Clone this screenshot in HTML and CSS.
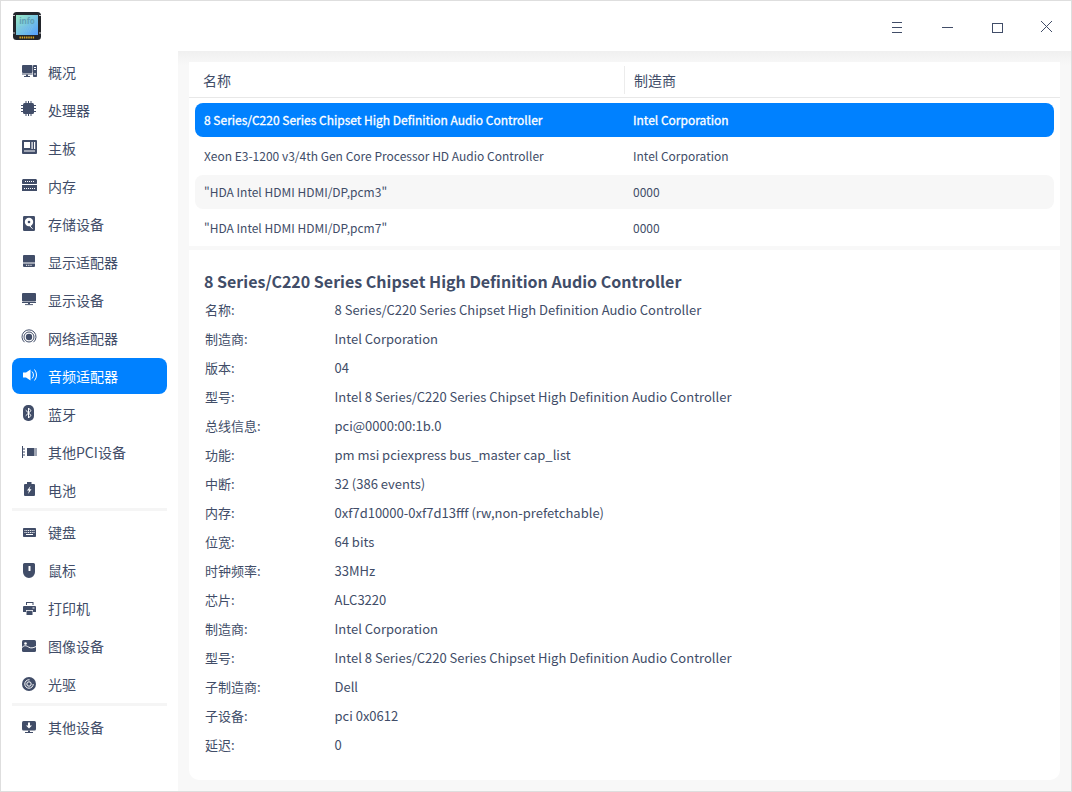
FILE: index.html
```html
<!DOCTYPE html>
<html lang="zh-CN">
<head>
    <meta charset="UTF-8">
    <meta name="viewport" content="width=device-width, initial-scale=1.0">
    <title>设备管理器</title>
    <link rel="stylesheet" href="styles.css">
</head>
<body>
    <div class="window">
        <div class="titlebar">
            <svg class="app-icon" viewBox="0 0 28 28">
                <defs>
                    <linearGradient id="screen" x1="0" y1="0" x2="1" y2="1">
                        <stop offset="0" stop-color="#9aeac4"/>
                        <stop offset="1" stop-color="#559fff"/>
                    </linearGradient>
                </defs>
                <rect width="28" height="28" rx="3.5" fill="#22252b"/>
                <rect x="3" y="3" width="22" height="20" fill="url(#screen)"/>
                <text x="14" y="12" class="app-icon-text">info</text>
                <path d="M7 15h14M8 17h12M9 19h9" stroke="#7dbcec" stroke-width="1" stroke-dasharray="1 1"/>
                <path d="M6.500 25.500h15" stroke="#e0a81c" stroke-width="2" stroke-dasharray="1.400 .8"/>
                <path d="M0 3.500h2M26 3.500h2M0 21h2M26 21h2" stroke="#c8c8c8" stroke-width="1.200"/>
            </svg>
            <div class="window-buttons">
                <svg class="win-btn" viewBox="0 0 50 50"><path d="M21 21.500h10M21 26.500h10M21 31.500h10" stroke="#414d68" fill="none"/></svg>
                <svg class="win-btn" viewBox="0 0 50 50"><path d="M21 26.500h11" stroke="#414d68" fill="none"/></svg>
                <svg class="win-btn" viewBox="0 0 50 50"><rect x="21.500" y="22.500" width="10" height="9" stroke="#414d68" fill="none"/></svg>
                <svg class="win-btn" viewBox="0 0 50 50"><path d="M20 20l11 11M31 20l-11 11" stroke="#414d68" fill="none"/></svg>
            </div>
        </div>

        <div class="body">
            <div class="sidebar">
                <div class="nav-item">
                    <svg class="nav-icon" viewBox="0 0 16 16"><rect x="1" y="1" width="10.500" height="8" rx="1"/><rect x="1" y="9.500" width="10.500" height="1"/><rect x="5" y="10.500" width="2" height="1.500"/><rect x="3" y="12" width="6" height="1"/><rect x="12" y="1" width="4" height="12" rx=".7"/><rect class="cut" x="13" y="3" width="2" height="1"/><rect class="cut" x="13" y="5" width="2" height="1"/><rect class="cut" x="13.500" y="9" width="1" height="2"/></svg>
                    <span>概况</span>
                </div>
                <div class="nav-item">
                    <svg class="nav-icon" viewBox="0 0 16 16"><rect x="2" y="1" width="11" height="11" rx="1.500"/><path class="pins" d="M5 -1v2M7.500 -1v2M10 -1v2M5 12v2M7.500 12v2M10 12v2M0 3.500h2M0 6.500h2M0 9.500h2M13 3.500h2M13 6.500h2M13 9.500h2"/></svg>
                    <span>处理器</span>
                </div>
                <div class="nav-item">
                    <svg class="nav-icon" viewBox="0 0 16 16"><rect x="1" y="0" width="15" height="14" rx="1"/><rect class="cut" x="3" y="2" width="6" height="6"/><rect class="cut" x="10.500" y="2" width="1.200" height="7"/><rect class="cut" x="13" y="2" width="1.200" height="7"/><rect class="cut" x="3" y="10.500" width="11" height="1"/></svg>
                    <span>主板</span>
                </div>
                <div class="nav-item">
                    <svg class="nav-icon" viewBox="0 0 16 16"><path d="M2 1h13l1 1v3.500l-.6.6.6.6V13H1V6.700l.6-.6-.6-.6V2z"/><path class="cut-line" d="M4 3.500h9" stroke-dasharray="1 1"/><path class="cut-line" d="M1 6.500h15"/><path class="cut-line" d="M3 10.500h11" stroke-width="3" stroke-dasharray="1 1"/></svg>
                    <span>内存</span>
                </div>
                <div class="nav-item">
                    <svg class="nav-icon" viewBox="0 0 16 16"><rect x="2" y="0" width="12" height="15" rx="1.200"/><circle class="cut" cx="8" cy="6" r="4.200"/><circle cx="8" cy="6" r="1.300"/><path class="cut-line" d="M7.500 8.500l4 4.200" stroke-width="1.500"/></svg>
                    <span>存储设备</span>
                </div>
                <div class="nav-item">
                    <svg class="nav-icon" viewBox="0 0 16 16"><path d="M3 1h10a1 1 0 0 1 1 1v6.500H2V2a1 1 0 0 1 1-1z"/><path d="M2 9.500h12V12a1 1 0 0 1-1 1H3a1 1 0 0 1-1-1z"/><path class="cut-line" d="M5 11.300h6" stroke-dasharray="1.200 1"/></svg>
                    <span>显示适配器</span>
                </div>
                <div class="nav-item">
                    <svg class="nav-icon" viewBox="0 0 16 16"><rect x="1" y="1" width="14" height="8.500" rx="1"/><rect x="1" y="10" width="14" height="1"/><rect x="7" y="11" width="2" height="1.200"/><rect x="4" y="12.200" width="8" height=".9"/></svg>
                    <span>显示设备</span>
                </div>
                <div class="nav-item">
                    <svg class="nav-icon" viewBox="0 0 16 16"><circle cx="8" cy="7" r="3.200"/><circle class="ring" cx="8" cy="7" r="5"/><path class="ring" d="M3.500 12.200a7 7 0 1 1 9 0"/></svg>
                    <span>网络适配器</span>
                </div>
                <div class="nav-item active">
                    <svg class="nav-icon" viewBox="0 0 16 16"><path d="M2 4.500h3L9.500 1.500v11L5 9.500H2z"/><path class="ring" d="M11 3.500a5 5 0 0 1 0 7"/><path class="ring" d="M13.500 1.500a8.500 8.500 0 0 1 0 11"/></svg>
                    <span>音频适配器</span>
                </div>
                <div class="nav-item">
                    <svg class="nav-icon" viewBox="0 0 16 16"><rect x="2" y="-1" width="11" height="16" rx="5"/><path class="cut-line" d="M4.700 4.200l5.300 5.200-2.500 2.600V2l2.500 2.600-5.300 5.200" stroke-width=".9"/></svg>
                    <span>蓝牙</span>
                </div>
                <div class="nav-item">
                    <svg class="nav-icon" viewBox="0 0 16 16"><rect x="1" y="2" width="1" height="12"/><rect x="2" y="4.500" width="2" height="1"/><rect x="2" y="7.500" width="2" height="1"/><rect x="2" y="10.500" width="2" height="1"/><rect x="6" y="4" width="7.500" height="8"/><rect x="14.500" y="4" width="1" height="8"/></svg>
                    <span>其他PCI设备</span>
                </div>
                <div class="nav-item">
                    <svg class="nav-icon" viewBox="0 0 16 16"><path d="M6 0h4.500v2H13a1 1 0 0 1 1 1v10a1 1 0 0 1-1 1H4a1 1 0 0 1-1-1V3a1 1 0 0 1 1-1h2z"/><path class="cut" d="M9.500 4L6 8.500h2L7 12l3.500-4.700H8.500z"/></svg>
                    <span>电池</span>
                </div>
                <div class="separator"></div>
                <div class="nav-item">
                    <svg class="nav-icon" viewBox="0 0 16 16"><rect x="2" y="4" width="13" height="9" rx=".8"/><path class="cut-line" d="M3.500 6.500h10M3.500 8.500h10" stroke-dasharray="1 .8"/><path class="cut-line" d="M5 10.500h7"/></svg>
                    <span>键盘</span>
                </div>
                <div class="nav-item">
                    <svg class="nav-icon" viewBox="0 0 16 16"><path d="M3.500 1h9A1.500 1.500 0 0 1 14 2.500V10a6 6 0 0 1-12 0V2.500A1.500 1.500 0 0 1 3.500 1z"/><rect class="cut" x="7.500" y="4" width="2" height="5" rx=".5"/></svg>
                    <span>鼠标</span>
                </div>
                <div class="nav-item">
                    <svg class="nav-icon" viewBox="0 0 16 16"><path d="M5 2h7.500v3h-1V3H6v2H5z"/><path d="M3 6h11a1 1 0 0 1 1 1v5h-3V10H5v2H2V7a1 1 0 0 1 1-1z"/><rect x="5.500" y="10.800" width="6" height="4.200"/><rect class="cut" x="11.500" y="7.500" width="2" height="1"/></svg>
                    <span>打印机</span>
                </div>
                <div class="nav-item">
                    <svg class="nav-icon" viewBox="0 0 16 16"><rect x="1" y="2" width="14" height="12" rx="1.500"/><circle class="cut" cx="4.500" cy="5.500" r="1.300"/><path class="cut-line" d="M1 9.500c2.500-2.500 4-2 6.500-.5s4.500 1 7.500-.5" stroke-width="1.200"/></svg>
                    <span>图像设备</span>
                </div>
                <div class="nav-item">
                    <svg class="nav-icon" viewBox="0 0 16 16"><circle cx="8" cy="8" r="7"/><circle class="cut-line" cx="8" cy="8" r="4.200" stroke-dasharray="20 6"/><circle class="cut-line" cx="8" cy="8" r="2.200"/></svg>
                    <span>光驱</span>
                </div>
                <div class="separator separator-low"></div>
                <div class="nav-item">
                    <svg class="nav-icon" viewBox="0 0 16 16"><rect x="1" y="2" width="14" height="9.500" rx="1.500"/><path class="cut" d="M7 3.500h2v3h2L8 9.500 5 6.500h2z"/><rect x="7" y="11.500" width="2" height="1.500"/><rect x="4" y="13" width="8" height="1"/></svg>
                    <span>其他设备</span>
                </div>
            </div>

            <div class="main">
                <div class="list-card">
                    <div class="list-header">
                        <div class="col-name">名称</div>
                        <div class="col-vendor">制造商</div>
                    </div>
                    <div class="list-row selected">
                        <div class="col-name">8 Series/C220 Series Chipset High Definition Audio Controller</div>
                        <div class="col-vendor">Intel Corporation</div>
                    </div>
                    <div class="list-row">
                        <div class="col-name">Xeon E3-1200 v3/4th Gen Core Processor HD Audio Controller</div>
                        <div class="col-vendor">Intel Corporation</div>
                    </div>
                    <div class="list-row striped">
                        <div class="col-name">"HDA Intel HDMI HDMI/DP,pcm3"</div>
                        <div class="col-vendor">0000</div>
                    </div>
                    <div class="list-row">
                        <div class="col-name">"HDA Intel HDMI HDMI/DP,pcm7"</div>
                        <div class="col-vendor">0000</div>
                    </div>
                </div>

                <div class="detail-card">
                    <h2 class="detail-title">8 Series/C220 Series Chipset High Definition Audio Controller</h2>
                    <div class="detail-row"><span class="detail-label">名称:</span><span>8 Series/C220 Series Chipset High Definition Audio Controller</span></div>
                    <div class="detail-row"><span class="detail-label">制造商:</span><span>Intel Corporation</span></div>
                    <div class="detail-row"><span class="detail-label">版本:</span><span>04</span></div>
                    <div class="detail-row"><span class="detail-label">型号:</span><span>Intel 8 Series/C220 Series Chipset High Definition Audio Controller</span></div>
                    <div class="detail-row"><span class="detail-label">总线信息:</span><span>pci@0000:00:1b.0</span></div>
                    <div class="detail-row"><span class="detail-label">功能:</span><span>pm msi pciexpress bus_master cap_list</span></div>
                    <div class="detail-row"><span class="detail-label">中断:</span><span>32 (386 events)</span></div>
                    <div class="detail-row"><span class="detail-label">内存:</span><span>0xf7d10000-0xf7d13fff (rw,non-prefetchable)</span></div>
                    <div class="detail-row"><span class="detail-label">位宽:</span><span>64 bits</span></div>
                    <div class="detail-row"><span class="detail-label">时钟频率:</span><span>33MHz</span></div>
                    <div class="detail-row"><span class="detail-label">芯片:</span><span>ALC3220</span></div>
                    <div class="detail-row"><span class="detail-label">制造商:</span><span>Intel Corporation</span></div>
                    <div class="detail-row"><span class="detail-label">型号:</span><span>Intel 8 Series/C220 Series Chipset High Definition Audio Controller</span></div>
                    <div class="detail-row"><span class="detail-label">子制造商:</span><span>Dell</span></div>
                    <div class="detail-row"><span class="detail-label">子设备:</span><span>pci 0x0612</span></div>
                    <div class="detail-row"><span class="detail-label">延迟:</span><span>0</span></div>
                </div>
            </div>
        </div>
    </div>
</body>
</html>
```

FILE: styles.css
```css
* {
    box-sizing: border-box;
}

html, body {
    margin: 0;
    height: 100%;
}

body {
    font-family: "Noto Sans CJK SC", "Noto Sans", sans-serif;
    color: #414d68;
    background-color: #ffffff;
    overflow: hidden;
}

.window {
    display: flex;
    flex-direction: column;
    height: 100vh;
    border: 1px solid #dedede;
}

/* title bar */
.titlebar {
    display: flex;
    justify-content: space-between;
    flex: none;
    height: 50px;
    background-color: #ffffff;
}

.app-icon {
    width: 28px;
    height: 28px;
    margin: 11px 0 0 12px;
}

.app-icon-text {
    font-family: "Noto Sans", sans-serif;
    font-size: 8px;
    font-weight: 700;
    fill: #5f9fb5;
    text-anchor: middle;
}

.window-buttons {
    display: flex;
}

.win-btn {
    width: 50px;
    height: 50px;
}

.body {
    display: flex;
    flex: 1;
    min-height: 0;
}

/* left navigation */
.sidebar {
    flex: none;
    width: 177px;
    padding: 3px 11px 0;
    background-color: #ffffff;
}

.nav-item {
    display: flex;
    align-items: center;
    gap: 11px;
    height: 36px;
    margin-bottom: 2px;
    padding-left: 9px;
    border-radius: 8px;
    font-size: 14px;
}

.nav-item.active {
    background-color: #0081ff;
    color: #ffffff;
}

.nav-icon {
    flex: none;
    width: 16px;
    height: 16px;
    overflow: visible;
    fill: currentColor;
}

.nav-icon .cut {
    fill: #ffffff;
}

.nav-icon .cut-line {
    fill: none;
    stroke: #ffffff;
    stroke-width: 1;
}

.nav-icon .pins,
.nav-icon .ring {
    fill: none;
    stroke: currentColor;
    stroke-width: 1;
}

.separator {
    height: 3px;
    margin: -2px 0 3px;
    background-color: #f5f5f5;
}

.separator-low {
    margin-top: -1px;
}

/* right side */
.main {
    display: flex;
    flex-direction: column;
    flex: 1;
    min-width: 0;
    padding: 11px;
    background: linear-gradient(#f0f0f0, #f8f8f8 14px);
}

.list-card {
    flex: none;
    height: 184px;
    background-color: #ffffff;
}

.list-header {
    display: flex;
    align-items: center;
    height: 36px;
    margin-bottom: 5px;
    border-bottom: 1px solid #e8e8e8;
    padding-left: 14px;
    font-size: 14px;
}

.list-header .col-name {
    width: 421px;
}

.list-header .col-vendor {
    height: 28px;
    line-height: 28px;
    padding-left: 9px;
    border-left: 1px solid #ececec;
}

.list-row {
    display: flex;
    align-items: center;
    height: 34px;
    margin: 0 6px 2px;
    padding: 0 0 2px 9px;
    border-radius: 8px;
    font-size: 12px;
}

.list-row .col-name {
    width: 429px;
}

.list-row.selected {
    background-color: #0081ff;
    color: #ffffff;
    -webkit-text-stroke: 0.3px #ffffff;
}

.list-row.striped {
    background-color: #f7f7f7;
}

.detail-card {
    flex: 1;
    margin-top: 4px;
    padding: 17px 15px 0;
    background-color: #ffffff;
    border-radius: 0 0 10px 10px;
}

.detail-title {
    margin: 0;
    font-size: 16px;
    font-weight: 700;
    line-height: 28px;
}

.detail-row {
    display: flex;
    height: 29px;
    line-height: 29px;
    font-size: 13px;
}

.detail-label {
    flex: none;
    width: 130.5px;
    padding-left: 1px;
}
```
